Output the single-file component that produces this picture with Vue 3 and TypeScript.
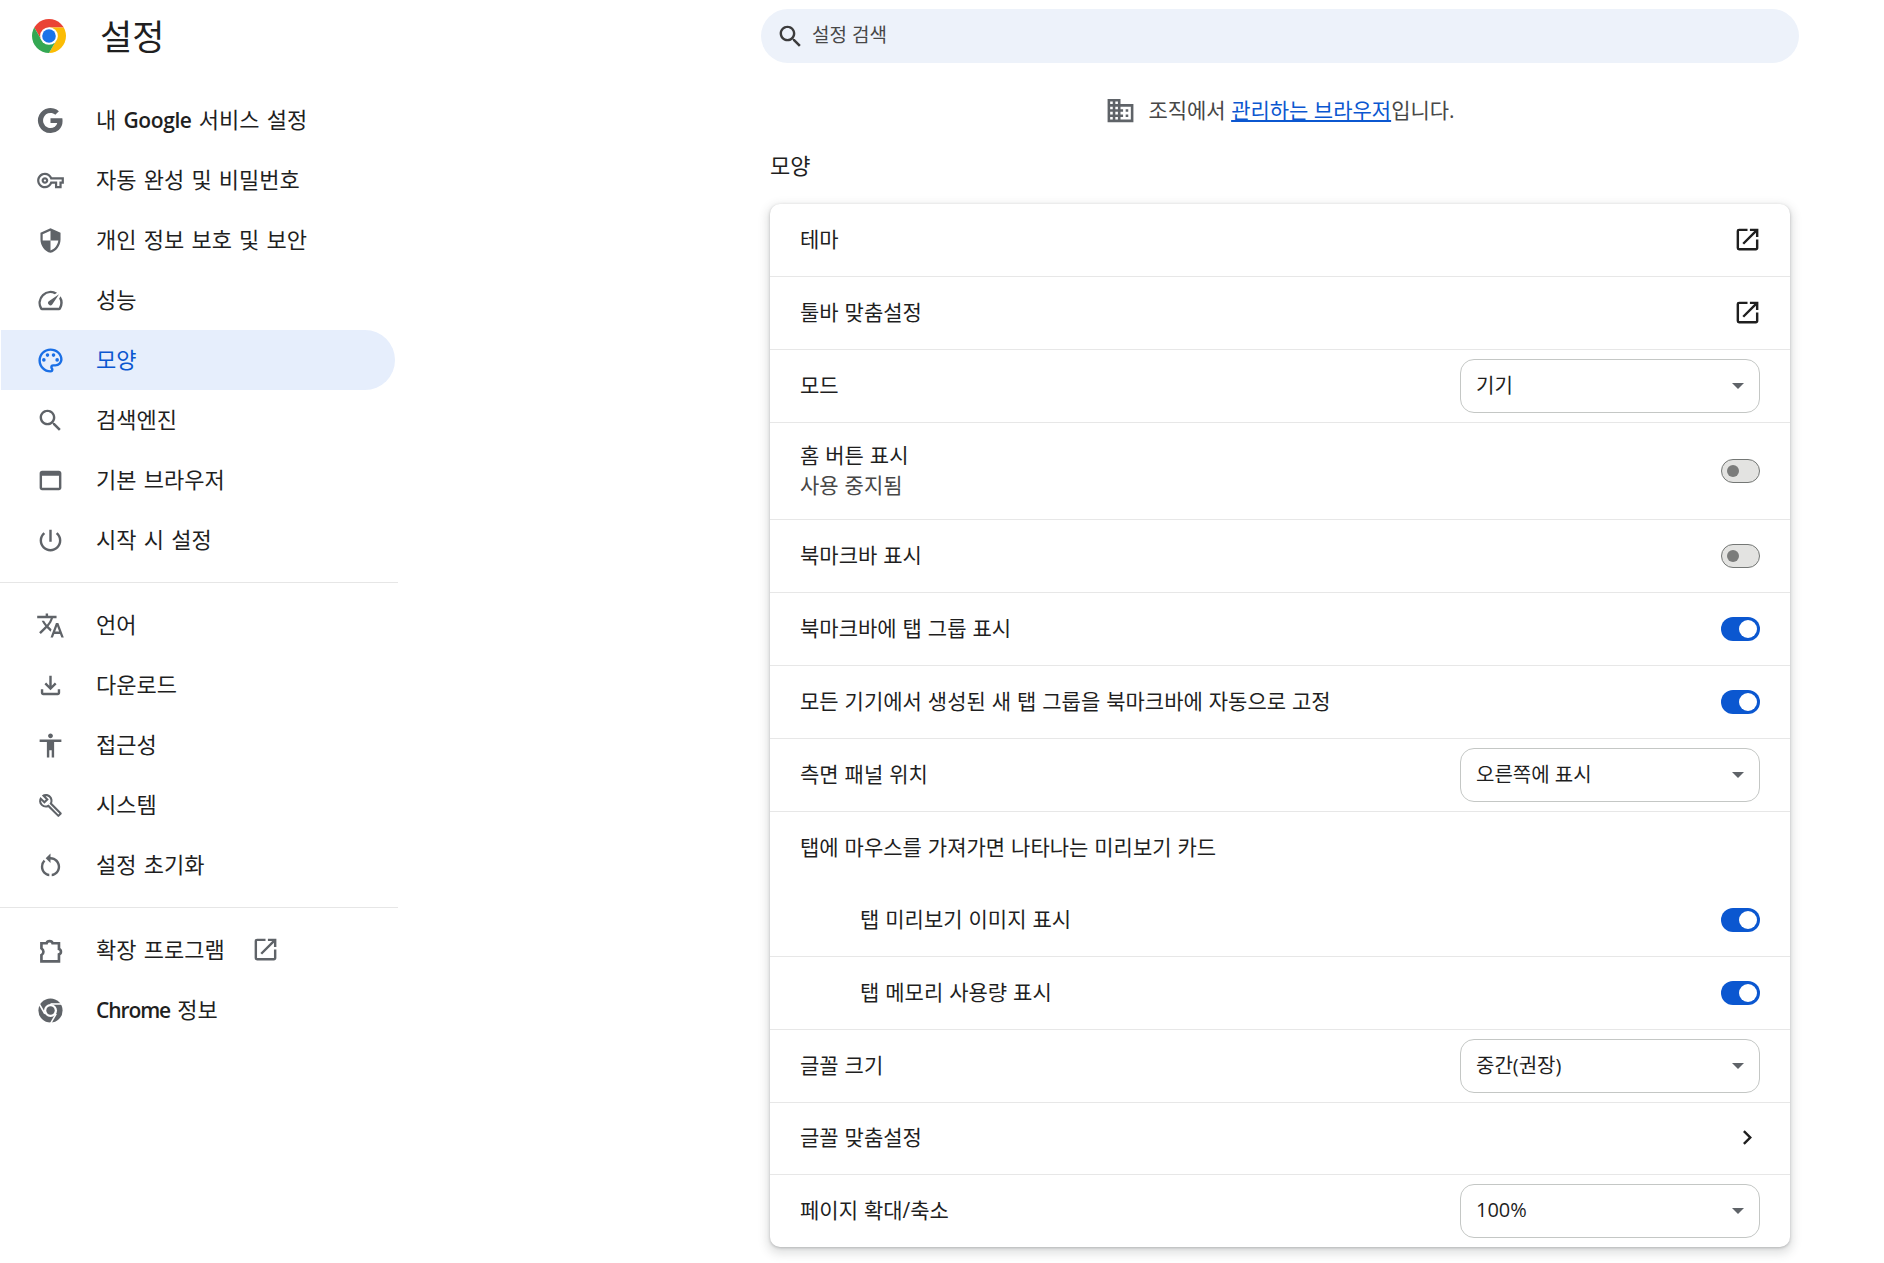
<script setup lang="ts">
interface NavItem { label: string; icon: string; active?: boolean; ext?: boolean }
type Control = 'ext' | 'off' | 'on' | 'select' | 'chev' | 'none'
interface Row { label: string; sub?: string; control: Control; value?: string; indent?: boolean; noLine?: boolean; cls?: string }

const I: Record<string, string> = {
  g: 'M20.64 12.2c0-.63-.06-1.25-.16-1.84H12v3.49h4.84a4.14 4.14 0 0 1-1.8 2.71v2.26h2.92a8.78 8.78 0 0 0 2.68-6.62zM12 21a8.6 8.6 0 0 0 5.96-2.18l-2.91-2.26a5.4 5.4 0 0 1-8.09-2.85h-3v2.33A9 9 0 0 0 12 21zM6.96 13.71a5.41 5.41 0 0 1 0-3.42V7.96h-3a9 9 0 0 0 0 8.08l3-2.33zM12 6.58c1.32 0 2.5.45 3.44 1.35l2.58-2.58A9 9 0 0 0 3.96 7.96l3 2.33A5.36 5.36 0 0 1 12 6.58z',
  key: 'M22 19h-6v-4h-2.68c-1.14 2.42-3.6 4-6.32 4-3.86 0-7-3.14-7-7s3.14-7 7-7c2.72 0 5.17 1.58 6.32 4H24v6h-2v4zm-4-2h2v-4h2v-2H11.94l-.23-.67C11.01 8.34 9.11 7 7 7c-2.76 0-5 2.24-5 5s2.24 5 5 5c2.11 0 4.01-1.34 4.71-3.33l.23-.67H18v4zM7 15c-1.65 0-3-1.35-3-3s1.35-3 3-3 3 1.35 3 3-1.35 3-3 3zm0-4c-.55 0-1 .45-1 1s.45 1 1 1 1-.45 1-1-.45-1-1-1z',
  shield: 'M12 1L3 5v6c0 5.55 3.84 10.74 9 12 5.16-1.26 9-6.45 9-12V5l-9-4zm0 10.99h7c-.53 4.12-3.28 7.79-7 8.94V12H5V6.3l7-3.11v8.8z',
  speed: 'M20.38 8.57l-1.23 1.85a8 8 0 0 1-.22 7.58H5.07A8 8 0 0 1 15.58 6.85l1.85-1.23A10 10 0 0 0 3.35 19a2 2 0 0 0 1.72 1h13.85a2 2 0 0 0 1.74-1 10 10 0 0 0-.27-10.44zm-9.79 6.84a2 2 0 0 0 2.83 0l5.66-8.49-8.49 5.66a2 2 0 0 0 0 2.83z',
  palette: 'M12 22C6.49 22 2 17.51 2 12S6.49 2 12 2s10 4.04 10 9c0 3.31-2.69 6-6 6h-1.77c-.28 0-.5.22-.5.5 0 .12.05.23.13.33.41.47.64 1.06.64 1.67A2.5 2.5 0 0 1 12 22zm0-18c-4.41 0-8 3.59-8 8s3.59 8 8 8c.28 0 .5-.22.5-.5a.54.54 0 0 0-.14-.35c-.41-.46-.63-1.05-.63-1.65a2.5 2.5 0 0 1 2.5-2.5H16c2.21 0 4-1.79 4-4 0-3.86-3.59-7-8-7zM6.5 10a1.5 1.5 0 1 1 0 3 1.5 1.5 0 0 1 0-3zm3-4a1.5 1.5 0 1 1 0 3 1.5 1.5 0 0 1 0-3zm5 0a1.5 1.5 0 1 1 0 3 1.5 1.5 0 0 1 0-3zm3 4a1.5 1.5 0 1 1 0 3 1.5 1.5 0 0 1 0-3z',
  search: 'M15.5 14h-.79l-.28-.27C15.41 12.59 16 11.11 16 9.5 16 5.91 13.09 3 9.5 3S3 5.91 3 9.5 5.91 16 9.5 16c1.61 0 3.09-.59 4.23-1.57l.27.28v.79l5 4.99L20.49 19l-4.99-5zm-6 0C7.01 14 5 11.99 5 9.5S7.01 5 9.5 5 14 7.01 14 9.5 11.99 14 9.5 14z',
  web: 'M19 4H5c-1.11 0-2 .9-2 2v12c0 1.1.89 2 2 2h14c1.1 0 2-.9 2-2V6c0-1.1-.89-2-2-2zm0 14H5V8h14v10z',
  power: 'M13 3h-2v10h2V3zm4.83 2.17l-1.42 1.42C17.99 7.86 19 9.81 19 12c0 3.87-3.13 7-7 7s-7-3.13-7-7c0-2.19 1.01-4.14 2.58-5.42L6.17 5.17C4.23 6.82 3 9.26 3 12c0 4.97 4.03 9 9 9s9-4.03 9-9c0-2.74-1.23-5.18-3.17-6.83z',
  translate: 'M12.87 15.07l-2.54-2.51.03-.03c1.74-1.94 2.98-4.17 3.71-6.53H17V4h-7V2H8v2H1v1.99h11.17C11.5 7.92 10.44 9.75 9 11.35 8.07 10.32 7.3 9.19 6.69 8h-2c.73 1.63 1.73 3.17 2.98 4.56l-5.09 5.02L4 19l5-5 3.11 3.11.76-2.04zM18.5 10h-2L12 22h2l1.12-3h4.75L21 22h2l-4.5-12zm-2.62 7l1.62-4.33L19.12 17h-3.24z',
  download: 'M12 16l-5-5 1.4-1.45 2.6 2.6V4h2v8.15l2.6-2.6L17 11zm-6 4q-.825 0-1.412-.587Q4 18.825 4 18v-3h2v3h12v-3h2v3q0 .825-.587 1.413Q18.825 20 18 20z',
  access: 'M12 2c1.1 0 2 .9 2 2s-.9 2-2 2-2-.9-2-2 .9-2 2-2zm9 7h-6v13h-2v-6h-2v6H9V9H3V7h18v2z',
  build: 'M22.61 18.99l-9.08-9.08c.93-2.34.45-5.1-1.44-7C9.79.61 6.21.4 3.66 2.26L7.5 6.11 6.08 7.52 2.25 3.69C.39 6.23.6 9.82 2.9 12.11c1.86 1.86 4.57 2.35 6.89 1.48l9.11 9.11c.39.39 1.02.39 1.41 0l2.3-2.3c.4-.38.4-1.01 0-1.41zm-3 1.6l-9.46-9.46c-.61.45-1.29.72-2 .82-1.36.2-2.79-.21-3.83-1.25C3.37 9.76 2.93 8.5 3 7.26l3.09 3.09 4.24-4.24-3.09-3.09c1.24-.07 2.49.37 3.44 1.31 1.08 1.08 1.49 2.57 1.24 3.96-.12.71-.42 1.37-.88 1.96l9.45 9.45-.88.88z',
  reset: 'M12 5V2L8 6l4 4V7c3.31 0 6 2.69 6 6 0 2.97-2.16 5.43-5 5.91v2.02c3.95-.49 7-3.85 7-7.93 0-4.42-3.58-8-8-8zM6 13c0-1.65.67-3.15 1.76-4.24L6.34 7.34A7.93 7.93 0 0 0 4 13c0 4.08 3.05 7.44 7 7.93v-2.02C8.16 18.43 6 15.97 6 13z',
  ext: 'M4.5 6h4.3a2.5 2.2 0 0 1 4.9 0h5.3v4.8a2.3 2.3 0 0 1 0 4.4V21H4.5v-5.2a3.2 3.2 0 0 0 0-5.6z',
  open: 'M19 19H5V5h7V3H5a2 2 0 0 0-2 2v14a2 2 0 0 0 2 2h14c1.1 0 2-.9 2-2v-7h-2v7zM14 3v2h3.59l-9.83 9.83 1.41 1.41L19 6.41V10h2V3h-7z',
  domain: 'M12 7V3H2v18h20V7H12zM6 19H4v-2h2v2zm0-4H4v-2h2v2zm0-4H4V9h2v2zm0-4H4V5h2v2zm4 12H8v-2h2v2zm0-4H8v-2h2v2zm0-4H8V9h2v2zm0-4H8V5h2v2zm10 12h-8v-2h2v-2h-2v-2h2v-2h-2V9h8v10zm-2-8h-2v2h2v-2zm0 4h-2v2h2v-2z',
  chev: 'M9.7 6 8.3 7.4 12.9 12l-4.6 4.6L9.7 18l6-6z'
}

const VB: Record<string, string> = {
  g: '1.6 1.6 20.8 20.8',
  key: '-1 -1 26 26',
  shield: '-1 -1 26 26',
  build: '-2 -2 28 28',
  default: '0 0 24 24'
}
function vb(name: string): string {
  return VB[name] ?? VB.default
}
function parts(label: string): string[] {
  return label.split(/(Google|Chrome)/).filter(Boolean)
}
const latin = (s: string): boolean => s === 'Google' || s === 'Chrome'

const navGroups: NavItem[][] = [
  [
    { label: '내 Google 서비스 설정', icon: 'g' },
    { label: '자동 완성 및 비밀번호', icon: 'key' },
    { label: '개인 정보 보호 및 보안', icon: 'shield' },
    { label: '성능', icon: 'speed' },
    { label: '모양', icon: 'palette', active: true },
    { label: '검색엔진', icon: 'search' },
    { label: '기본 브라우저', icon: 'web' },
    { label: '시작 시 설정', icon: 'power' }
  ],
  [
    { label: '언어', icon: 'translate' },
    { label: '다운로드', icon: 'download' },
    { label: '접근성', icon: 'access' },
    { label: '시스템', icon: 'build' },
    { label: '설정 초기화', icon: 'reset' }
  ],
  [
    { label: '확장 프로그램', icon: 'ext', ext: true },
    { label: 'Chrome 정보', icon: 'chrome' }
  ]
]

const rows: Row[] = [
  { label: '테마', control: 'ext', cls: 'first' },
  { label: '툴바 맞춤설정', control: 'ext' },
  { label: '모드', control: 'select', value: '기기' },
  { label: '홈 버튼 표시', sub: '사용 중지됨', control: 'off', cls: 'tall' },
  { label: '북마크바 표시', control: 'off' },
  { label: '북마크바에 탭 그룹 표시', control: 'on' },
  { label: '모든 기기에서 생성된 새 탭 그룹을 북마크바에 자동으로 고정', control: 'on' },
  { label: '측면 패널 위치', control: 'select', value: '오른쪽에 표시' },
  { label: '탭에 마우스를 가져가면 나타나는 미리보기 카드', control: 'none', noLine: true },
  { label: '탭 미리보기 이미지 표시', control: 'on', indent: true },
  { label: '탭 메모리 사용량 표시', control: 'on', indent: true },
  { label: '글꼴 크기', control: 'select', value: '중간(권장)' },
  { label: '글꼴 맞춤설정', control: 'chev', cls: 'short' },
  { label: '페이지 확대/축소', control: 'select', value: '100%' }
]
</script>

<template>
  <div class="page">
    <aside class="side">
      <header class="brand">
        <svg class="logo" viewBox="0 0 48 48" aria-hidden="true">
          <defs><clipPath id="round"><circle cx="24" cy="24" r="24" /></clipPath></defs>
          <g clip-path="url(#round)">
            <polygon fill="#ea4335" points="24,24 24,12 64,12 64,-40 -40,-40 -6.39,-4.64 13.61,30" />
            <polygon fill="#fbbc04" points="24,24 34.39,30 14.39,64.64 64,64 64,12 24,12" />
            <polygon fill="#34a853" points="24,24 13.61,30 -6.39,-4.64 -40,64 14.39,64.64 34.39,30" />
          </g>
          <circle cx="24" cy="24" r="12.5" fill="#fff" />
          <circle cx="24" cy="24" r="9.6" fill="#1a73e8" />
        </svg>
        <h1 class="title">설정</h1>
      </header>
      <nav class="nav">
        <template v-for="(group, gi) in navGroups" :key="gi">
          <div v-if="gi > 0" class="sep"></div>
          <a v-for="item in group" :key="item.label" class="item" :class="{ active: item.active }">
            <svg v-if="item.icon === 'chrome'" class="ico" viewBox="0 0 24 24" aria-hidden="true">
              <circle cx="12" cy="12" r="10" fill="#5f6368" />
              <circle cx="12" cy="12" r="5.4" fill="#fff" />
              <circle cx="12" cy="12" r="3.5" fill="#5f6368" />
              <g stroke="#fff" stroke-width="1.3">
                <line x1="12" y1="6.6" x2="23" y2="6.6" />
                <line x1="12" y1="6.6" x2="23" y2="6.6" transform="rotate(120 12 12)" />
                <line x1="12" y1="6.6" x2="23" y2="6.6" transform="rotate(240 12 12)" />
              </g>
            </svg>
            <svg v-else class="ico" :class="{ stroked: item.icon === 'ext' }" :viewBox="vb(item.icon)" aria-hidden="true"><path :d="I[item.icon]" /></svg>
            <span class="label"><template v-for="(p, pi) in parts(item.label)" :key="pi"><span v-if="latin(p)" class="lat" :class="{ narrow: p === 'Chrome' }">{{ p }}</span><template v-else>{{ p }}</template></template></span>
            <svg v-if="item.ext" class="ico open" viewBox="0 0 24 24" aria-hidden="true"><path :d="I.open" /></svg>
          </a>
        </template>
      </nav>
    </aside>

    <main class="main">
      <div class="search">
        <svg class="search-ico" viewBox="0 0 24 24" aria-hidden="true"><path :d="I.search" /></svg>
        <span class="search-text">설정 검색</span>
      </div>
      <div class="managed">
        <svg class="domain" viewBox="0 0 24 24" aria-hidden="true"><path :d="I.domain" /></svg>
        <span class="managed-text">조직에서 <a class="link">관리하는 브라우저</a>입니다.</span>
      </div>
      <h2 class="heading">모양</h2>
      <section class="card">
        <div
          v-for="row in rows"
          :key="row.label"
          class="row"
          :class="[row.cls, { indent: row.indent, noline: row.noLine }]"
        >
          <div class="row-in">
            <div class="text">
              <div>{{ row.label }}</div>
              <div v-if="row.sub" class="sub">{{ row.sub }}</div>
            </div>
            <svg v-if="row.control === 'ext'" class="act" viewBox="0 0 24 24" aria-hidden="true"><path :d="I.open" /></svg>
            <svg v-else-if="row.control === 'chev'" class="act" viewBox="0 0 24 24" aria-hidden="true"><path :d="I.chev" /></svg>
            <span v-else-if="row.control === 'on' || row.control === 'off'" class="toggle" :class="row.control"><i></i></span>
            <div v-else-if="row.control === 'select'" class="select">
              <span class="select-text">{{ row.value }}</span>
              <i class="caret"></i>
            </div>
          </div>
        </div>
      </section>
    </main>
  </div>
</template>

<style>
html, body { margin: 0; background: #fff; overflow: hidden; }
</style>

<style scoped>
.page {
  display: flex;
  width: 1884px;
  height: 1263px;
  overflow: hidden;
  color: #1f1f1f;
  font-family: "Open Sans", "Noto Sans CJK KR", sans-serif;
}
.side { flex: 0 0 398px; }
.brand { display: flex; align-items: center; height: 72px; padding-left: 32px; }
.logo { width: 34px; height: 34px; }
.title { margin: 2px 0 0 34px; font-size: 35px; font-weight: 400; line-height: 72px; color: #1f1f1f; }
.nav { padding-top: 18px; }
.item {
  display: flex;
  align-items: center;
  height: 60px;
  width: 394px;
  margin-left: 1px;
  padding-left: 35px;
  box-sizing: border-box;
  border-radius: 0 30px 30px 0;
  font-size: 22px;
  word-spacing: 1.5px;
  color: #1f1f1f;
}
.item.active { background: #e6eefc; color: #0b57d0; }
.ico { width: 29px; height: 29px; flex: none; fill: #5f6368; }
.ico.stroked { fill: none; stroke: #5f6368; stroke-width: 2.2; }
.item.active .ico { fill: #1a6fe6; }
.label { margin-left: 31px; margin-top: -4px; white-space: nowrap; }
.lat { font-weight: 600; font-size: 21px; letter-spacing: -0.4px; }
.lat.narrow { letter-spacing: -1.1px; }
.ico.open { margin-left: 26px; margin-top: -2px; }
.sep { height: 1px; background: #e6e6e6; margin: 12px 0; width: 398px; }

.main { flex: 1; min-width: 0; }
.search {
  display: flex;
  align-items: center;
  margin: 9px 0 0 363px;
  width: 1038px;
  height: 54px;
  padding-left: 15px;
  box-sizing: border-box;
  border-radius: 27px;
  background: #edf2fa;
  color: #474747;
  font-size: 19px;
}
.search-ico { width: 29px; height: 29px; fill: #3c3c3c; margin-right: 7px; }
.search-text { margin-top: -5px; }
.managed {
  display: flex;
  align-items: center;
  justify-content: center;
  margin: 30px 0 0 372px;
  width: 1020px;
  height: 34px;
  font-size: 21px;
  color: #474747;
}
.managed-text { margin-top: -2px; }
.domain { width: 31px; height: 31px; fill: #5f6368; margin-right: 12px; }
.link { color: #0b57d0; text-decoration: underline; }
.heading {
  margin: 24px 0 0 372px;
  font-size: 22px;
  font-weight: 400;
  line-height: 28px;
  color: #1f1f1f;
}
.card {
  margin: 25px 0 0 372px;
  width: 1020px;
  background: #fff;
  border-radius: 10px;
  box-shadow: 0 1px 3px rgba(60, 64, 67, 0.3), 0 4px 10px 3px rgba(60, 64, 67, 0.15);
  overflow: hidden;
}
.row { padding: 0 30px; font-size: 21px; word-spacing: 0.5px; color: #1f1f1f; border-top: 1px solid #e7e7e7; }
.row-in {
  display: flex;
  align-items: center;
  justify-content: space-between;
  height: 72px;
}
.row.first { border-top: 0; }
.row.tall .row-in { height: 96px; }
.row.short .row-in { height: 71px; }
.row.indent { padding-left: 0; }
.row.indent .row-in { margin-left: 90px; }
.row.noline + .row { border-top: 0; }
.text { line-height: 30px; white-space: nowrap; margin-top: -3px; }
.sub { color: #474747; }
.act { width: 29px; height: 29px; fill: #1f1f1f; margin: -2px -2px 0 0; }
.toggle {
  position: relative;
  display: block;
  width: 39px;
  height: 24px;
  box-sizing: border-box;
  border-radius: 12px;
}
.toggle i { position: absolute; top: 50%; border-radius: 50%; transform: translateY(-50%); }
.toggle.off { background: #e3e3e1; border: 1px solid #747775; }
.toggle.off i { left: 5px; width: 12px; height: 12px; background: #7b7c7b; }
.toggle.on { background: #0b57d0; }
.toggle.on i { right: 3px; width: 18px; height: 18px; background: #fff; }
.select {
  display: flex;
  align-items: center;
  justify-content: space-between;
  width: 300px;
  height: 54px;
  box-sizing: border-box;
  padding: 0 15px;
  border: 1px solid #c4c7c5;
  border-radius: 14px;
  font-size: 20px;
  word-spacing: 0;
  color: #1f1f1f;
}
.select-text { margin-top: -4px; }
.caret {
  width: 0;
  height: 0;
  border-left: 6px solid transparent;
  border-right: 6px solid transparent;
  border-top: 6px solid #5f6368;
}
</style>
